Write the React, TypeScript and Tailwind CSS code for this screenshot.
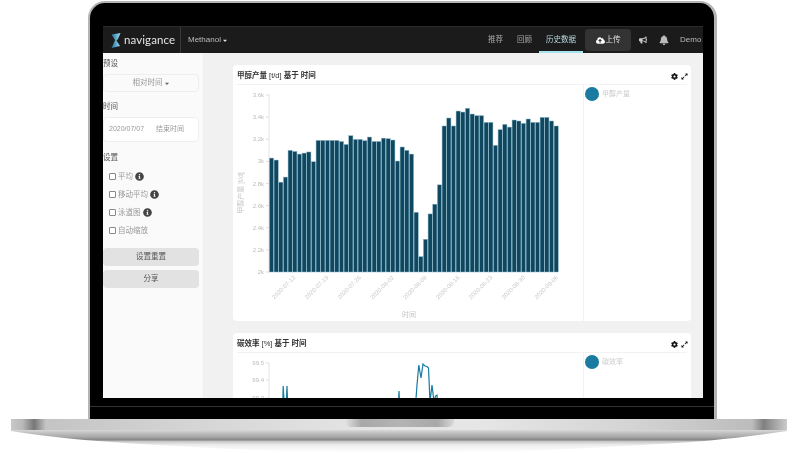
import { FaBell, FaBullhorn, FaCaretDown, FaCloudUploadAlt, FaCog, FaExpandAlt, FaInfoCircle } from "react-icons/fa";

const FONT = "font-['Liberation_Sans','Noto_Sans_CJK_SC',sans-serif]";

const production = [
    3030, 3012, 2812, 2858, 3100, 3090, 3066, 3075, 3085, 2997, 3190, 3190, 3190, 3190, 3190, 3180, 3153, 3232, 3199, 3199,
    3187, 3220, 3180, 3180, 3210, 3205, 3193, 3003, 3130, 3100, 3066, 2540, 2139, 2296, 2525, 2613, 2788, 3320, 3392, 3320,
    3455, 3446, 3480, 3428, 3413, 3413, 3353, 3353, 3145, 3287, 3335, 3310, 3374, 3365, 3344, 3383, 3353, 3353, 3398, 3398,
    3365, 3320,
];
const yTicks = ["2k", "2.2k", "2.4k", "2.6k", "2.8k", "3k", "3.2k", "3.4k", "3.6k"];
const xTicks = ["2020-07-12", "2020-07-19", "2020-07-26", "2020-08-02", "2020-08-09", "2020-08-16", "2020-08-23", "2020-08-30", "2020-09-06"];

function yOf(v: number) {
    return 272 - ((v - 2000) / 1600) * 177;
}

// ─── Charts ───────────────────────────────────────────────────────────────────
function ProductionChart() {
    return (
        <svg width="346" height="236" viewBox="237 85 346 236" className="block">
            <line x1="269" y1="95" x2="269" y2="272" stroke="#e4e4e4" />
            {yTicks.map((t, i) => {
                const y = 272 - i * 22.125;
                return (
                    <g key={t}>
                        <line x1="266" y1={y} x2="269" y2={y} stroke="#ddd" />
                        <text x="264" y={y + 2} textAnchor="end" fontSize="6" fill="#bbb">{t}</text>
                    </g>
                );
            })}
            {production.map((v, i) => (
                <rect
                    key={i}
                    x={269.4 + i * 4.667}
                    y={yOf(v)}
                    width="4.2"
                    height={272 - yOf(v)}
                    fill="#0e475f"
                    stroke="#8fb9c9"
                    strokeWidth="0.5"
                />
            ))}
            {xTicks.map((t, i) => {
                const x = 296 + i * 32.8;
                return (
                    <text key={t} x={x} y="278" textAnchor="end" fontSize="6" fill="#cacaca" transform={`rotate(-45 ${x} 278)`}>
                        {t}
                    </text>
                );
            })}
            <text x="243" y="193" textAnchor="middle" fontSize="7" fill="#cacaca" transform="rotate(-90 243 193)">甲醇产量 [t/d]</text>
            <text x="409" y="317" textAnchor="middle" fontSize="7" fill="#c4c4c4">时间</text>
        </svg>
    );
}

function EfficiencyChart() {
    const ticks = [{ l: "99.5", y: 363 }, { l: "99.4", y: 380 }, { l: "99.3", y: 398 }];
    return (
        <svg width="346" height="60" viewBox="237 353 346 60" className="block">
            <line x1="269" y1="363" x2="269" y2="410" stroke="#e4e4e4" />
            {ticks.map((t) => (
                <g key={t.l}>
                    <line x1="266" y1={t.y} x2="269" y2={t.y} stroke="#ddd" />
                    <text x="264" y={t.y + 2} textAnchor="end" fontSize="6" fill="#bbb">{t.l}</text>
                </g>
            ))}
            <polyline
                fill="none"
                stroke="#1a7aa0"
                strokeWidth="1.2"
                points="282.5,412 283.2,386 284.5,408 286,408 287,386 288,412"
            />
            <polyline
                fill="none"
                stroke="#1a7aa0"
                strokeWidth="1.2"
                points="398,412 399,391 400,412 415,412 417,385 418.8,365 421,378 423,364 425,366 427,366.5 428.5,368 430,402 432,385 434,402 435.5,396 437,395 438,412"
            />
        </svg>
    );
}

// ─── Card ─────────────────────────────────────────────────────────────────────
function Card({ title, unit, legend, children }: { title: string; unit: string; legend: string; children: React.ReactNode }) {
    return (
        <div className="flex h-[256px] shrink-0 flex-col rounded-sm bg-white px-[4px]">
            <div className="flex h-[20px] shrink-0 items-center justify-between border-b border-[#f2f2f2] pt-[3px]">
                <span className="text-[7.5px] font-bold text-[#333]">
                    {title} <span className="font-normal">[{unit}]</span> 基于 时间
                </span>
                <span className="-mr-px flex items-center gap-[3px] text-[#111]">
                    <FaCog className="h-[7px] w-[7px]" />
                    <FaExpandAlt className="h-[7px] w-[7px]" />
                </span>
            </div>
            <div className="flex flex-1">
                <div className="w-[346px] shrink-0">{children}</div>
                <div className="flex-1 border-l border-[#f2f2f2] pl-[1px] pt-[2px]">
                    <div className="flex items-center gap-[3px]">
                        <span className="h-[14px] w-[14px] rounded-full bg-[#1a7aa0]" />
                        <span className="text-[7px] text-[#cccccc]">{legend}</span>
                    </div>
                </div>
            </div>
        </div>
    );
}

// ─── Sidebar ──────────────────────────────────────────────────────────────────
function CheckRow({ label, info }: { label: string; info?: boolean }) {
    return (
        <div className="flex h-[18px] items-center pl-[6px] pt-px text-[7.5px] text-[#999]">
            <span className="mr-[2px] h-[7px] w-[7px] rounded-[1px] border border-[#888] bg-white" />
            <span>{label}</span>
            {info && <FaInfoCircle className="ml-[2px] h-[9px] w-[9px] text-[#444]" />}
        </div>
    );
}

function Sidebar() {
    return (
        <div className="w-[101px] shrink-0 border-r border-[#efefef] bg-[#fafafa] pr-[4px] pt-[4px]">
            <div className="h-[12px] text-[7.5px] leading-[13px] text-[#555]">预设</div>
            <div className="mt-[5px] flex h-[18px] items-center justify-center rounded-sm border border-[#eee] text-[7.5px] text-[#999]">
                相对时间 <FaCaretDown className="ml-[1px] h-[7px] w-[6px] text-[#666]" />
            </div>
            <div className="mt-[8px] h-[12px] text-[7.5px] leading-[13px] text-[#555]">时间</div>
            <div className="mt-[5px] flex h-[25px] items-center rounded-sm border border-[#eee] bg-white pl-[5px] text-[7px] text-[#999]">
                <span className="w-[47px]">2020/07/07</span>
                <span>结束时间</span>
            </div>
            <div className="mt-[9px] h-[12px] text-[7.5px] leading-[13px] text-[#555]">设置</div>
            <div className="mt-[4px]">
                <CheckRow label="平均" info />
                <CheckRow label="移动平均" info />
                <CheckRow label="泳道图" info />
                <CheckRow label="自动缩放" />
            </div>
            <button className="mt-[9px] block h-[18px] w-full rounded-sm bg-[#e2e2e2] text-[7.5px] text-[#555]">设置重置</button>
            <button className="mt-[4px] block h-[18px] w-full rounded-sm bg-[#e2e2e2] text-[7.5px] text-[#555]">分享</button>
        </div>
    );
}

// ─── Top bar ──────────────────────────────────────────────────────────────────
function Logo() {
    return (
        <svg width="10" height="15" viewBox="0 0 10 15" className="shrink-0">
            <defs>
                <linearGradient id="logo" x1="0" y1="0" x2="1" y2="0">
                    <stop offset="0" stopColor="#1f6fa0" />
                    <stop offset="1" stopColor="#9fe0ec" />
                </linearGradient>
            </defs>
            <path d="M0.5 1.5 L9.5 0 L7 6 L5.5 7.5 L9 13 L0.5 15 L3.5 8.5 L4 7 Z" fill="url(#logo)" />
        </svg>
    );
}

function TopBar() {
    return (
        <div className="flex h-[27px] shrink-0 items-stretch border-t border-[#2a2a2a] bg-[#1b1b1b]">
            <div className="flex w-[78px] items-center gap-[3px] border-r border-[#3a3a3a] pl-[8px]">
                <Logo />
                <span className="font-['Lato',sans-serif] text-[11.5px] leading-none tracking-[0.1px] text-[#e4e4e4]">navigance</span>
            </div>
            <div className="flex items-center pl-[7px] text-[8px] text-[#bbb]">
                Methanol <FaCaretDown className="ml-[1px] h-[7px] w-[6px] text-[#ddd]" />
            </div>
            <div className="ml-auto flex items-stretch text-[7.5px] text-[#aaa]">
                <span className="flex w-[29px] items-center justify-center">推荐</span>
                <span className="flex w-[29px] items-center justify-center">回顾</span>
                <span className="flex w-[44px] items-center justify-center border-b-2 border-[#a5e3f0] pt-[2px] text-[#b8d8e0]">历史数据</span>
                <span className="mx-[2px] my-[2px] flex w-[46px] items-center justify-center rounded-sm bg-[#333] text-[#e4e4e4]">
                    <FaCloudUploadAlt className="mr-[1px] h-[9px] w-[9px] text-white" />上传
                </span>
                <span className="ml-[6px] flex w-[12px] items-center text-[#ccc]"><FaBullhorn className="h-[8px] w-[8px]" /></span>
                <span className="ml-[8px] flex w-[13px] items-center text-[#bbb]"><FaBell className="h-[10px] w-[10px]" /></span>
                <span className="ml-[8px] flex w-[23px] items-center overflow-hidden whitespace-nowrap text-[8px] text-[#bbb]">
                    Demo <FaCaretDown className="ml-[1px] h-[7px] w-[6px] shrink-0" />
                </span>
            </div>
        </div>
    );
}

// ─── Laptop ───────────────────────────────────────────────────────────────────
export default function App() {
    return (
        <div className={`h-[453px] w-[800px] overflow-hidden bg-white ${FONT}`}>
            {/* Lid */}
            <div className="ml-[88px] mt-[1px] h-[418px] w-[629px] rounded-t-[17px] border-2 border-b-0 border-r-[3px] border-[#b4b4b4] bg-black pl-[13px] pr-[10px] pt-[23px]">
                <div className="flex h-[372px] w-[600px] flex-col overflow-hidden blur-[0.35px]">
                    <TopBar />
                    <div className="flex min-h-0 flex-1">
                        <Sidebar />
                        <div className="flex min-w-0 flex-1 flex-col gap-[12px] overflow-hidden bg-[#f1f1f1] pl-[29px] pr-[12px] pt-[12px]">
                            <Card title="甲醇产量" unit="t/d" legend="甲醇产量"><ProductionChart /></Card>
                            <Card title="碳效率" unit="%" legend="碳效率"><EfficiencyChart /></Card>
                        </div>
                    </div>
                </div>
                <div className="-ml-[13px] -mr-[10px] mt-[8px] h-px bg-[#333]" />
            </div>
            {/* Base */}
            <div className="ml-[11px] flex h-[11px] w-[776px] justify-center bg-[linear-gradient(90deg,#c8c8c8_0%,#b8b8b8_1.5%,#777_3%,#c4c4c4_4.5%,#d6d6d6_25%,#e4e4e4_45%,#e6e6e6_60%,#d4d4d4_80%,#bcbcbc_95.5%,#808080_97%,#999_98%,#cccccc_100%)]">
                <div className="h-[8px] w-[109px] rounded-b-[6px] bg-[linear-gradient(90deg,#e2e2e2,#a8a8a8_15%,#b4b4b4_50%,#a8a8a8_85%,#d8d8d8)]" />
            </div>
            <svg width="800" height="23" viewBox="0 430 800 23" className="block">
                <defs>
                    <linearGradient id="hull" x1="0" y1="0" x2="0" y2="1">
                        <stop offset="0" stopColor="#d8d8d8" />
                        <stop offset="0.13" stopColor="#c0c0c0" />
                        <stop offset="0.3" stopColor="#a8a8a8" />
                        <stop offset="0.43" stopColor="#858585" />
                        <stop offset="0.5" stopColor="#c8c8c8" />
                        <stop offset="0.65" stopColor="#eeeeee" />
                        <stop offset="1" stopColor="#ffffff" />
                    </linearGradient>
                </defs>
                <path d="M11 430 H787 V431 C740 438 700 442 660 444 C560 450 480 453 400 453 C320 453 240 450 140 444 C90 441 50 437 11 431 Z" fill="url(#hull)" />
            </svg>
        </div>
    );
}
